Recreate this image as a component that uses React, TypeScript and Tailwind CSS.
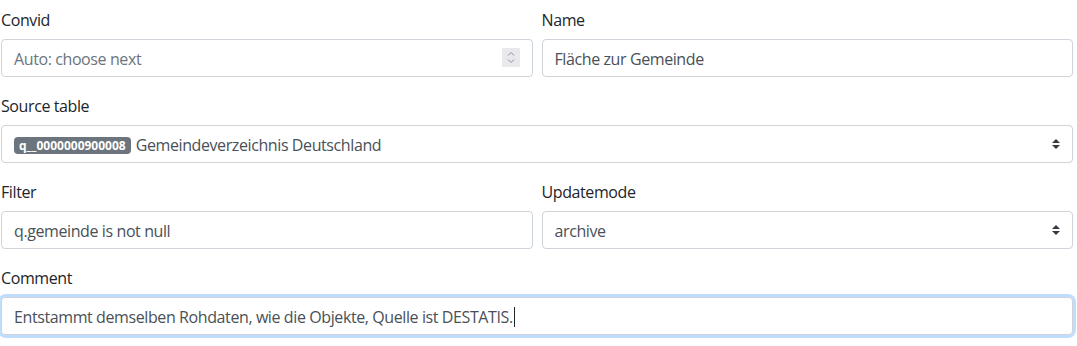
import React from "react";

const font = { fontFamily: '"Segoe UI", "Open Sans", "Liberation Sans", sans-serif' };

const inputCls =
  "block h-[38px] w-full rounded-[4px] border border-[#ced4da] bg-white px-3 pt-[2px] text-[16px] tracking-[-0.4px] text-[#495057] outline-none";

const SelectCaret = () => (
  <svg width="8" height="10" viewBox="0 0 4 5" className="absolute right-[13px] top-[14px]">
    <path fill="#343a40" d="M2 0L0 2h4zm0 5L0 3h4z" />
  </svg>
);

const Field = ({ label, children }: { label: string; children: React.ReactNode }) => (
  <div className="mb-4 flex-1">
    <label className="mb-[7px] block pt-[1px] text-[16px] leading-6 tracking-[-0.4px] text-[#212529]">{label}</label>
    {children}
  </div>
);

export default function App() {
  return (
    <div className="bg-white pl-[1px] pr-[4px] pt-[7px]" style={font}>
      <div className="flex gap-[9px]">
        <Field label="Convid">
          <div className="relative">
            <input className={inputCls + " placeholder:text-[#6c757d]"} placeholder="Auto: choose next" />
            <div className="absolute right-[13px] top-[9px] flex h-[19px] w-[18px] items-center justify-center bg-[#e9e9ed]">
              <svg width="10" height="15" viewBox="0 0 10 15">
                <path d="M2 5.5L5 2.5L8 5.5M2 9.5L5 12.5L8 9.5" fill="none" stroke="#8f8f9d" strokeWidth="1" />
              </svg>
            </div>
          </div>
        </Field>
        <Field label="Name">
          <input className={inputCls} defaultValue="Fläche zur Gemeinde" />
        </Field>
      </div>
      <Field label="Source table">
        <div className="relative">
          <div className={inputCls + " flex items-center gap-[5px]"}>
            <span className="rounded-[4px] bg-[#6c757d] px-[5px] text-[12px] font-bold leading-[17px] tracking-normal text-white">
              q__0000000900008
            </span>
            <span>Gemeindeverzeichnis Deutschland</span>
          </div>
          <SelectCaret />
        </div>
      </Field>
      <div className="flex gap-[9px]">
        <Field label="Filter">
          <input className={inputCls} defaultValue="q.gemeinde is not null" />
        </Field>
        <Field label="Updatemode">
          <div className="relative">
            <div className={inputCls + " flex items-center"}>archive</div>
            <SelectCaret />
          </div>
        </Field>
      </div>
      <Field label="Comment">
        <div className="rounded-[5px] shadow-[0_0_0_3px_rgba(0,123,255,0.25)]">
          <div className={inputCls + " flex items-center border-[#80bdff]"}>
            <span>Entstammt demselben Rohdaten, wie die Objekte, Quelle ist DESTATIS.</span>
            <span className="ml-[1px] inline-block h-[20px] w-[1px] bg-[#212529]" />
          </div>
        </div>
      </Field>
    </div>
  );
}
